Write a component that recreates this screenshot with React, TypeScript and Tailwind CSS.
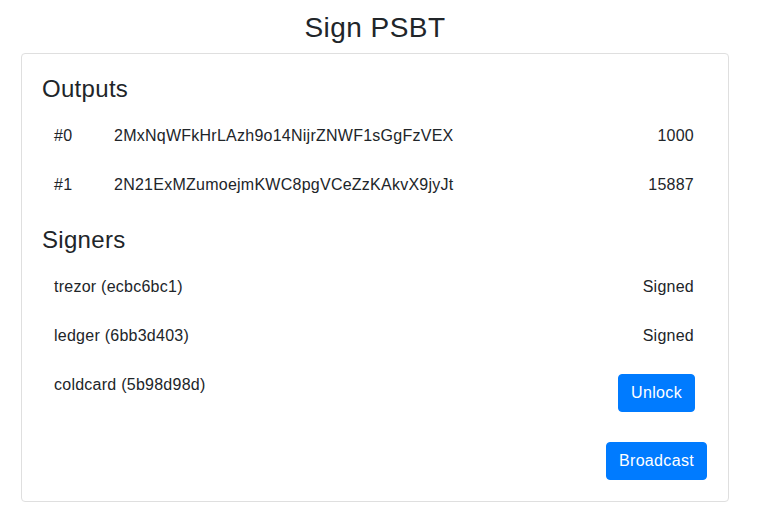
import React from "react";

const outputs = [
  { idx: "#0", addr: "2MxNqWFkHrLAzh9o14NijrZNWF1sGgFzVEX", amount: "1000" },
  { idx: "#1", addr: "2N21ExMZumoejmKWC8pgVCeZzKAkvX9jyJt", amount: "15887" },
];

const signers = [
  { name: "trezor (ecbc6bc1)", status: "Signed" },
  { name: "ledger (6bb3d403)", status: "Signed" },
];

export default function App() {
  return (
    <div
      className="min-h-[527px] bg-white text-[#212529]"
      style={{ fontFamily: '"Liberation Sans", Arial, sans-serif' }}
    >
      <div className="ml-[21px] w-[708px] pt-[11px]">
        <h3 className="text-center text-[28px] leading-[34px] mb-[8px] tracking-[0.45px]">Sign PSBT</h3>
        <div className="border border-[#dfdfdf] rounded-[4px] px-[20px] pt-[20px] pb-[21px]">
          <h4 className="text-[24px] leading-[29px] mb-[8px] tracking-[0.3px]">Outputs</h4>
          <div className="mb-[16px]">
            {outputs.map((o) => (
              <div key={o.idx} className="flex border-t border-transparent text-[16px] leading-[24px] tracking-[0.25px]">
                <div className="w-[60px] p-[12px]">{o.idx}</div>
                <div className="flex-1 p-[12px]">{o.addr}</div>
                <div className="py-[12px] pl-[12px] pr-[14px] text-right">{o.amount}</div>
              </div>
            ))}
          </div>
          <h4 className="text-[24px] leading-[29px] mb-[8px] tracking-[0.3px]">Signers</h4>
          <div className="mb-[18px]">
            {signers.map((s) => (
              <div key={s.name} className="flex border-t border-transparent text-[16px] leading-[24px] tracking-[0.25px]">
                <div className="flex-1 p-[12px]">{s.name}</div>
                <div className="py-[12px] pl-[12px] pr-[14px] text-right">{s.status}</div>
              </div>
            ))}
            <div className="flex items-start border-t border-transparent text-[16px] leading-[24px] tracking-[0.25px]">
              <div className="flex-1 p-[12px]">coldcard (5b98d98d)</div>
              <div className="pt-[13px] pb-[12px] pl-[12px] pr-[13px]">
                <button className="bg-[#007bff] text-white rounded-[4px] px-[12px] py-[6px] leading-[24px] border border-[#007bff] tracking-[0.33px]">
                  Unlock
                </button>
              </div>
            </div>
          </div>
          <div className="flex justify-end">
            <button className="mr-[1px] bg-[#007bff] text-white rounded-[4px] px-[12px] py-[6px] text-[16px] leading-[24px] border border-[#007bff] tracking-[0.33px]">
              Broadcast
            </button>
          </div>
        </div>
      </div>
    </div>
  );
}
